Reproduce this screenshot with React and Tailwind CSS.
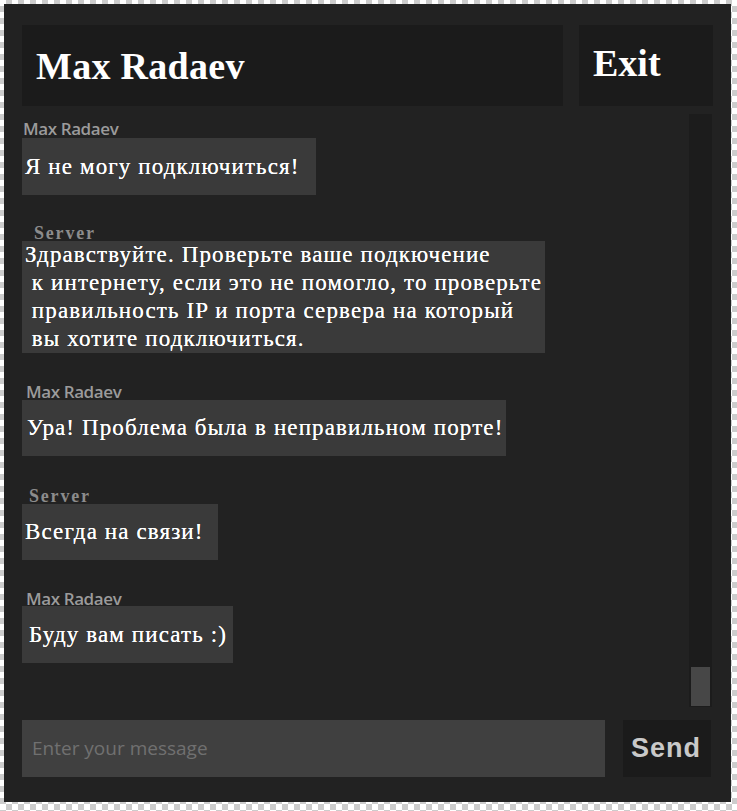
import React from "react";

const serif = { fontFamily: '"Liberation Serif", "Times New Roman", serif' };

function SansLabel({ children, ml, mt }) {
  return (
    <div
      className={`h-[16px] text-[17px] leading-[16px] font-semibold tracking-[-0.4px] text-[#9b9b9b] whitespace-nowrap ${ml} ${mt}`}
      style={{ fontFamily: '"Open Sans", sans-serif' }}
    >
      {children}
    </div>
  );
}

function ServerLabel({ ml, mt }) {
  return (
    <div
      className={`h-[16px] text-[18px] leading-[16px] font-bold tracking-[1.8px] text-[#8c8c8c] ${ml} ${mt}`}
      style={serif}
    >
      Server
    </div>
  );
}

function Bubble({ children, cls }) {
  return (
    <div
      className={`flex items-center bg-[#3a3a3a] text-white text-[23px] leading-[28px] tracking-[1.12px] whitespace-pre [text-shadow:0_0_0.6px_#ffffff] ${cls}`}
      style={serif}
    >
      {children}
    </div>
  );
}

export default function App() {
  return (
    <div className="w-[737px] h-[811px] pt-[4px] pl-[4px] bg-[image:repeating-conic-gradient(#cccccc_0%_25%,#ffffff_0%_50%)] bg-[length:12px_12px]">
      <div className="w-[727px] h-[798px] bg-[#222222] flex flex-col pt-[21px] pl-[18px] pr-[18px]">
        {/* Header */}
        <div className="flex h-[81px] gap-[16px] shrink-0">
          <div className="w-[541px] h-full bg-[#1b1b1b] flex items-center pl-[14px]">
            <span className="text-[38px] font-bold text-white leading-none tracking-[0.3px]" style={serif}>
              Max Radaev
            </span>
          </div>
          <div className="w-[134px] h-full bg-[#1b1b1b] flex items-center pl-[14px] pb-[6px]">
            <span className="text-[38px] font-bold text-white leading-none" style={serif}>
              Exit
            </span>
          </div>
        </div>

        {/* Chat area */}
        <div className="flex h-[614px] shrink-0">
          <div className="flex-1 flex flex-col overflow-hidden">
            <SansLabel ml="ml-[1px]" mt="mt-[15px]">Max Radaev</SansLabel>
            <Bubble cls="mt-[1px] w-[294px] h-[57px] pl-[3px]">Я не могу подключиться!</Bubble>

            <ServerLabel ml="ml-[12px]" mt="mt-[30px]" />
            <div
              className="-ml-[2px] w-[525px] h-[112px] bg-[#3a3a3a] text-white text-[23px] leading-[28px] tracking-[1.12px] whitespace-pre pl-[5px] [text-shadow:0_0_0.6px_#ffffff]"
              style={serif}
            >
              {"Здравствуйте. Проверьте ваше подкючение\n к интернету, если это не помогло, то проверьте\n правильность IP и порта сервера на который\n вы хотите подключиться."}
            </div>

            <SansLabel ml="ml-[4px]" mt="mt-[31px]">Max Radaev</SansLabel>
            <Bubble cls="w-[484px] h-[56px] pl-[5px]">Ура! Проблема была в неправильном порте!</Bubble>

            <ServerLabel ml="ml-[7px]" mt="mt-[32px]" />
            <Bubble cls="w-[196px] h-[56px] pl-[3px]">Всегда на связи!</Bubble>

            <SansLabel ml="ml-[4px]" mt="mt-[31px]">Max Radaev</SansLabel>
            <Bubble cls="-mt-[1px] w-[211px] h-[57px] pl-[7px]">Буду вам писать :)</Bubble>
          </div>

          {/* Scrollbar */}
          <div className="w-[23px] h-[593px] mt-[8px] mr-[1px] bg-[#1c1c1c] flex flex-col justify-end items-center pb-[1px]">
            <div className="w-[19px] h-[39px] bg-[#474747]" />
          </div>
        </div>

        {/* Input row */}
        <div className="flex h-[57px] shrink-0 items-stretch">
          <div className="w-[583px] bg-[#404040] flex items-center pl-[10px]">
            <span
              className="text-[19px] text-[#707070] leading-none"
              style={{ fontFamily: '"Open Sans", sans-serif' }}
            >
              Enter your message
            </span>
          </div>
          <div className="ml-[18px] w-[88px] bg-[#1b1b1b] flex items-center pl-[8px]">
            <span
              className="text-[27px] font-bold text-[#c9c9c9] leading-none tracking-[1px]"
              style={{ fontFamily: '"Liberation Sans", Arial, sans-serif' }}
            >
              Send
            </span>
          </div>
        </div>
      </div>
    </div>
  );
}
